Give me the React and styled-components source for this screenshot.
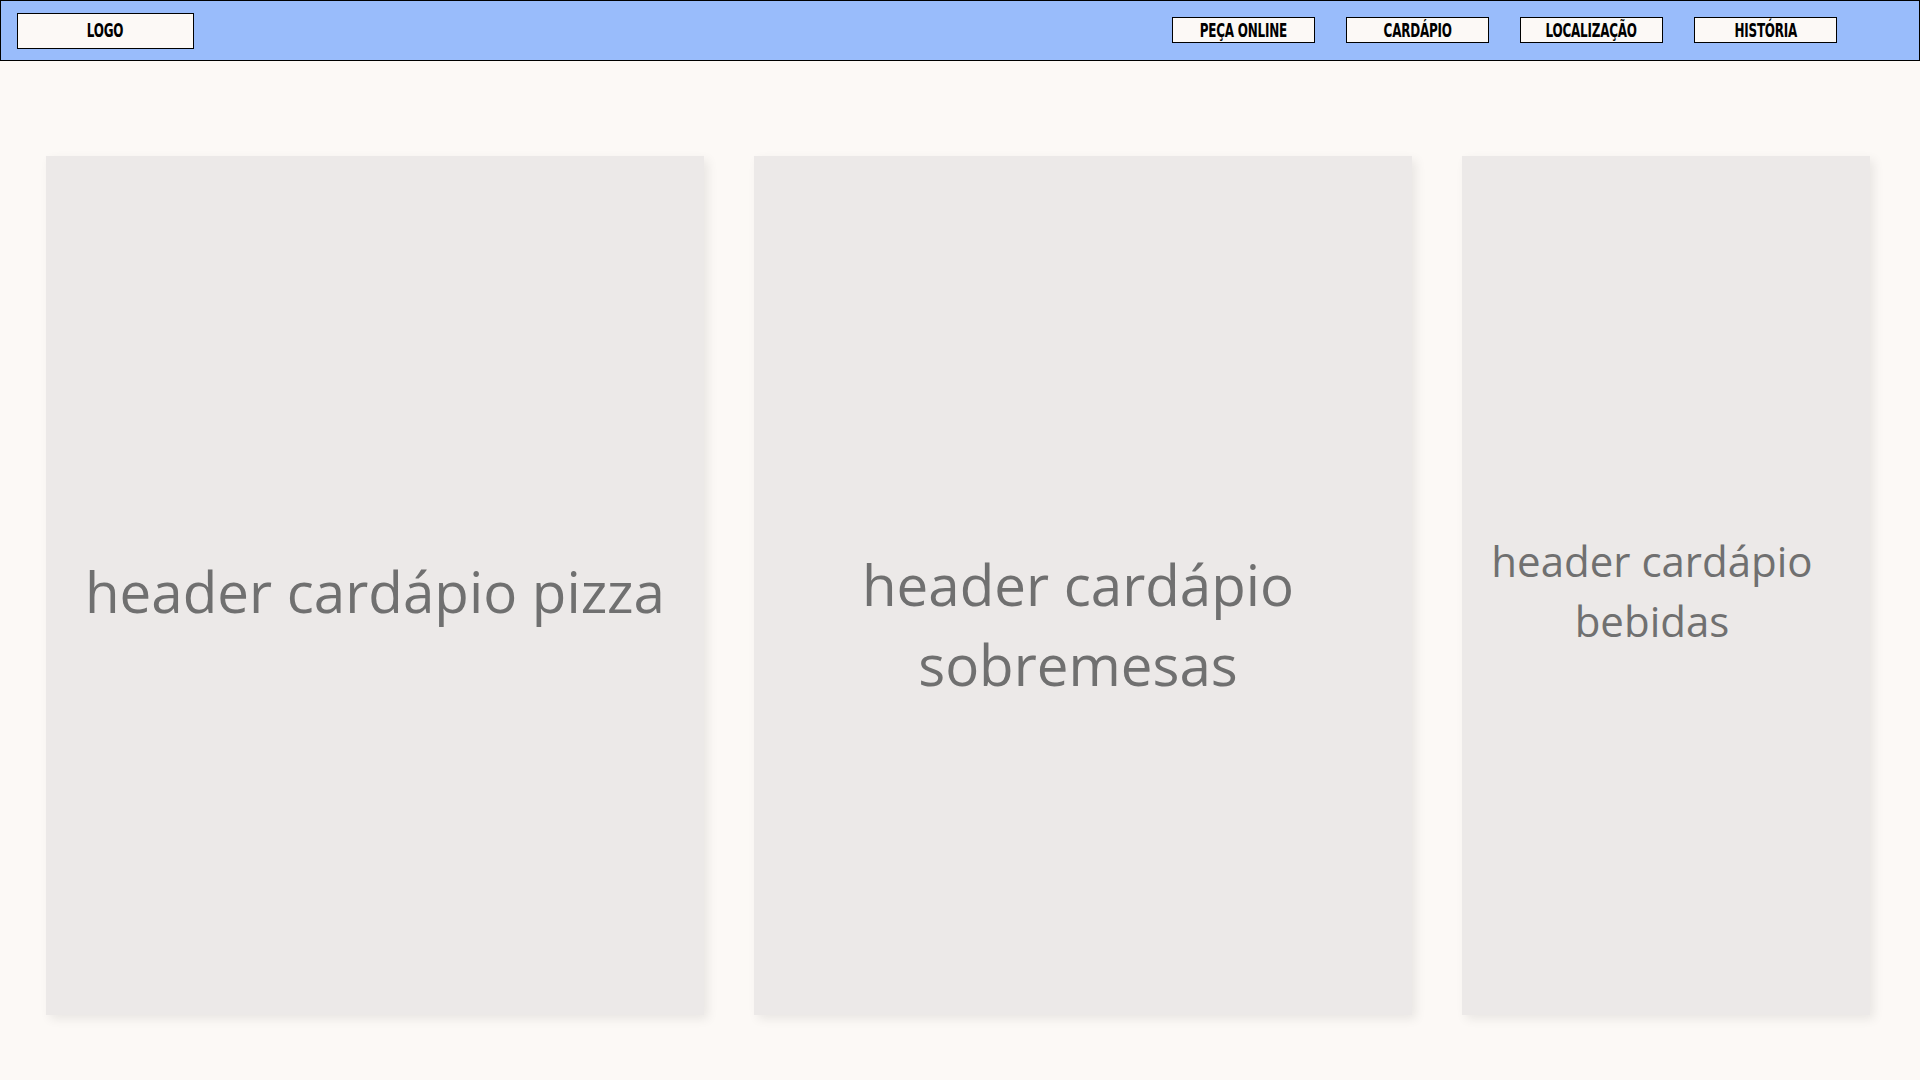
import React from 'react';
import styled, { createGlobalStyle } from 'styled-components';

const GlobalStyle = createGlobalStyle`
  * { box-sizing: border-box; }
  body {
    margin: 0;
    background: #fcf9f6;
    font-family: "Open Sans", "Noto Sans", sans-serif;
  }
`;

const Header = styled.header`
  height: 61px;
  display: flex;
  align-items: center;
  justify-content: space-between;
  padding: 0 82px 0 16px;
  background: #99bcfb;
  border: 1px solid #000;
`;

const BoxLabel = styled.div`
  display: flex;
  align-items: center;
  justify-content: center;
  width: ${({ w }) => w}px;
  height: ${({ h }) => h}px;
  background: #fcf9f6;
  border: 1.5px solid #000;
  overflow: hidden;
`;

const LabelText = styled.span`
  display: inline-block;
  white-space: nowrap;
  color: #000;
  font-family: "DejaVu Sans Condensed", "Liberation Sans", sans-serif;
  font-weight: 700;
  font-size: 19px;
  line-height: 1;
  letter-spacing: -0.3px;
  transform: scaleX(0.7);
`;

const Nav = styled.nav`
  display: flex;
  gap: 31px;
  margin-top: -1px;
`;

const Main = styled.main`
  display: grid;
  grid-template-columns: 658px 658px 408px;
  gap: 50px;
  padding: 95px 50px 64px 46px;
`;

const Card = styled.section`
  height: 859px;
  display: flex;
  align-items: center;
  justify-content: center;
  padding-top: ${({ shiftY }) => shiftY || 0}px;
  padding-right: ${({ shiftX }) => shiftX || 0}px;
  background: #ece9e8;
  box-shadow: 4px 4px 10px rgba(0, 0, 0, 0.08);
`;

const CardTitle = styled.h2`
  margin: 0;
  text-align: center;
  font-weight: 400;
  font-size: ${({ size }) => size}px;
  line-height: ${({ lh }) => lh}px;
  color: #707070;
`;

const links = ['PEÇA ONLINE', 'CARDÁPIO', 'LOCALIZAÇÃO', 'HISTÓRIA'];

const App = () => (
  <>
    <GlobalStyle />
    <Header>
      <BoxLabel w={177} h={36}>
        <LabelText>LOGO</LabelText>
      </BoxLabel>
      <Nav>
        {links.map((l) => (
          <BoxLabel key={l} w={143} h={26}>
            <LabelText>{l}</LabelText>
          </BoxLabel>
        ))}
      </Nav>
    </Header>
    <Main>
      <Card shiftY={12}>
        <CardTitle size={56.5} lh={80}>header cardápio pizza</CardTitle>
      </Card>
      <Card shiftY={78} shiftX={10}>
        <CardTitle size={56.5} lh={80}>header cardápio<br />sobremesas</CardTitle>
      </Card>
      <Card shiftY={10} shiftX={28}>
        <CardTitle size={42} lh={60}>header cardápio<br />bebidas</CardTitle>
      </Card>
    </Main>
  </>
);

export default App;
